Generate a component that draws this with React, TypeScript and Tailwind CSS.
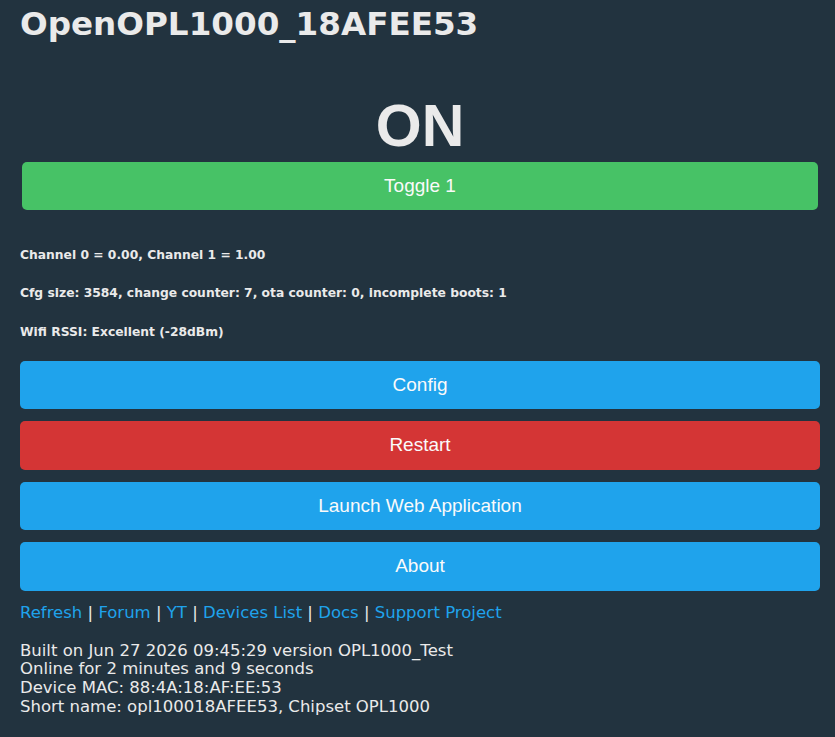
import React from 'react';

const verdana = { fontFamily: '"DejaVu Sans", Verdana, sans-serif' };

const buttons = [
  { label: 'Config', color: 'bg-[#1fa3ec]' },
  { label: 'Restart', color: 'bg-[#d43535]' },
  { label: 'Launch Web Application', color: 'bg-[#1fa3ec]' },
  { label: 'About', color: 'bg-[#1fa3ec]' },
];

const links = ['Refresh', 'Forum', 'YT', 'Devices List', 'Docs', 'Support Project'];

const App = () => {
  return (
    <div className="min-h-[737px] w-full bg-[#22333f] text-[#eaeaea]">
      <div className="ml-[20px] w-[800px] flex flex-col">
        <h1
          className="pt-[4px] text-[32.6px] leading-[40px] font-bold font-['DejaVu_Sans',Verdana,sans-serif]"
        >
          OpenOPL1000_18AFEE53
        </h1>

        <div className="mt-[53px] text-center text-[59px] leading-[59px] font-bold font-['Liberation_Sans',Arial,sans-serif]">
          ON
        </div>
        <button className="mt-[6px] mx-[2px] h-[48px] rounded-[5px] bg-[#47c266] text-[19px] text-[#fafafa] font-['Liberation_Sans',Arial,sans-serif]">
          Toggle 1
        </button>

        <div className="mt-[36.5px] flex flex-col gap-[22.5px] text-[12.3px] leading-[16px] font-bold font-['DejaVu_Sans',Verdana,sans-serif]">
          <div>Channel 0 = 0.00, Channel 1 = 1.00</div>
          <div>Cfg size: 3584, change counter: 7, ota counter: 0, incomplete boots: 1</div>
          <div>Wifi RSSI: Excellent (-28dBm)</div>
        </div>

        <div className="mt-[21.5px] flex flex-col gap-[12px]">
          {buttons.map((b) => (
            <button
              key={b.label}
              className={`h-[48.4px] w-full rounded-[5px] ${b.color} text-[19px] text-[#fafafa] font-['Liberation_Sans',Arial,sans-serif]`}
            >
              {b.label}
            </button>
          ))}
        </div>

        <div className="mt-[13px] text-[16.5px] leading-[18.67px]" style={verdana}>
          {links.map((l, i) => (
            <React.Fragment key={l}>
              {i > 0 && <span> | </span>}
              <a href="#" className="text-[#1fa3ec]">
                {l}
              </a>
            </React.Fragment>
          ))}
        </div>

        <div className="mt-[19.5px] text-[16.5px] leading-[18.67px]" style={verdana}>
          <div>Built on Jun 27 2026 09:45:29 version OPL1000_Test</div>
          <div>Online for 2 minutes and 9 seconds</div>
          <div>Device MAC: 88:4A:18:AF:EE:53</div>
          <div>Short name: opl100018AFEE53, Chipset OPL1000</div>
        </div>
      </div>
    </div>
  );
};

export default App;
